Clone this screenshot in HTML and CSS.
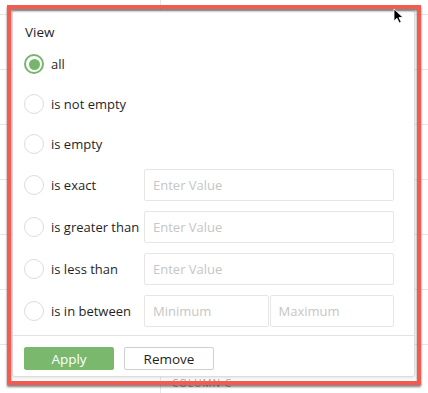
FILE: index.html
```html
<!DOCTYPE html>
<html>
<head>
<meta charset="utf-8">
<link rel="stylesheet" href="styles.css">
</head>
<body>
<div class="sheet">
  <div class="panel">
    <div class="title">View</div>
    <div class="options">
      <div class="opt"><span class="radio checked"></span><span class="lbl">all</span></div>
      <div class="opt"><span class="radio"></span><span class="lbl">is not empty</span></div>
      <div class="opt"><span class="radio"></span><span class="lbl">is empty</span></div>
      <div class="opt tall"><span class="radio"></span><span class="lbl">is exact</span><div class="fields"><input class="field" placeholder="Enter Value"></div></div>
      <div class="opt tall"><span class="radio"></span><span class="lbl">is greater than</span><div class="fields"><input class="field" placeholder="Enter Value"></div></div>
      <div class="opt tall"><span class="radio"></span><span class="lbl">is less than</span><div class="fields"><input class="field" placeholder="Enter Value"></div></div>
      <div class="opt tall"><span class="radio"></span><span class="lbl">is in between</span><div class="fields"><input class="field" placeholder="Minimum"><input class="field" placeholder="Maximum"></div></div>
    </div>
    <div class="footer">
      <button class="btn apply">Apply</button>
      <button class="btn remove">Remove</button>
    </div>
  </div>
  <div class="col-label">COLUMN C</div>
  <div class="annot"></div>
  <svg class="cursor" width="12" height="16" viewBox="0 0 12 16"><path d="M1 1 L1 13 L4 10.2 L6.3 15 L8.2 14.1 L6 9.5 L10 9.5 Z" fill="#000" stroke="#fff" stroke-width="0.8"/></svg>
</div>
</body>
</html>
```
FILE: styles.css
```css
html, body {
  margin: 0;
  padding: 0;
}
body {
  width: 428px;
  height: 393px;
  overflow: hidden;
  font-family: "Open Sans", "Noto Sans", sans-serif;
  color: #1f1f1f;
  background-color: #fff;
  background-image:
    linear-gradient(to bottom, #e6e6e6 1px, transparent 1px),
    linear-gradient(to right, transparent 160px, #e6e6e6 160px, #e6e6e6 161px, transparent 161px);
  background-size: 100% 55px, 100% 100%;
  background-position: 0 14px, 0 0;
  background-repeat: repeat-y, no-repeat;
}
.sheet {
  position: relative;
  width: 428px;
  height: 393px;
  padding-top: 10px;
  box-sizing: border-box;
  overflow: hidden;
}
.panel {
  margin-left: 12px;
  width: 403px;
  box-sizing: border-box;
  background: #fff;
  border: 1px solid #dedede;
  border-radius: 3px;
  box-shadow: 0 1px 3px rgba(0,0,0,0.12);
}
.title {
  padding: 11px 0 0 12px;
  font-size: 13.5px;
  line-height: 20px;
  margin-bottom: 2px;
}
.options {
  padding: 0 20px 3px 11px;
  display: flex;
  flex-direction: column;
}
.opt {
  display: flex;
  align-items: center;
  height: 40px;
  font-size: 13px;
}
.opt.tall {
  height: 42px;
}
.radio {
  flex: 0 0 auto;
  width: 20px;
  height: 20px;
  box-sizing: border-box;
  border: 1.5px solid #dcdcdc;
  border-radius: 50%;
  margin-right: 7px;
  display: flex;
  align-items: center;
  justify-content: center;
}
.radio.checked {
  border: 2.5px solid #76b66b;
}
.radio.checked::after {
  content: "";
  width: 11px;
  height: 11px;
  border-radius: 50%;
  background: #76b66b;
}
.lbl {
  flex: 0 0 93px;
  white-space: nowrap;
}
.fields {
  width: 250px;
  flex: 0 0 250px;
  display: flex;
  gap: 1px;
}
.field {
  flex: 1 1 0;
  width: 0;
  min-width: 0;
  height: 32px;
  box-sizing: border-box;
  border: 1px solid #e6e6e6;
  border-radius: 2px;
  padding: 0 8px;
  font-family: "Open Sans", "Noto Sans", sans-serif;
  font-size: 13px;
  color: #333;
  background: #fff;
  outline: none;
}
.field::placeholder {
  color: #c6c6c6;
}
.footer {
  border-top: 1px solid #e3e3e3;
  padding: 11px 11px 6px;
  display: flex;
  gap: 10px;
}
.btn {
  width: 90px;
  height: 23px;
  box-sizing: border-box;
  border-radius: 2px;
  font-family: "Open Sans", "Noto Sans", sans-serif;
  font-size: 13.5px;
  line-height: 20px;
  padding: 0;
}
.apply {
  background: #7ab86e;
  border: 1px solid #7ab86e;
  color: #fff;
}
.remove {
  background: #fff;
  border: 1px solid #cfcfcf;
  color: #1f1f1f;
}
.col-label {
  margin-left: 172px;
  font-size: 10px;
  line-height: 12px;
  color: #a0a0a0;
  letter-spacing: 1px;
}
.annot {
  position: absolute;
  left: 7px;
  top: 5px;
  width: 414px;
  height: 380px;
  box-sizing: border-box;
  border: 4px solid #f45a4e;
  filter: drop-shadow(0 2px 1px rgba(0,0,0,0.5));
}
.cursor {
  position: absolute;
  left: 393px;
  top: 8px;
}
```
